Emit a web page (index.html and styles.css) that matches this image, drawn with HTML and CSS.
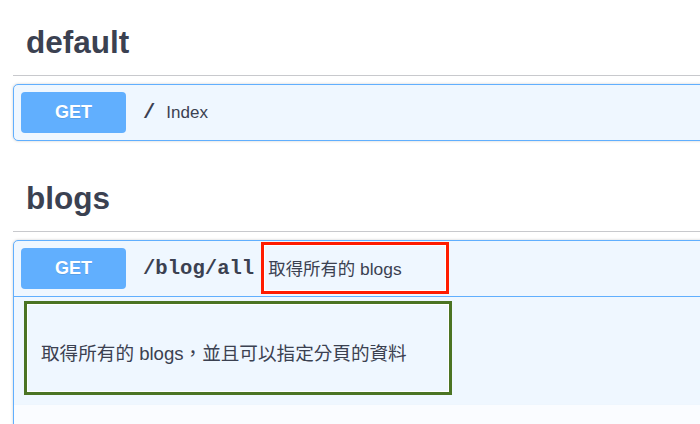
FILE: index.html
```html
<!DOCTYPE html>
<html lang="zh-Hant">
<head>
<meta charset="utf-8">
<title>Swagger</title>
<link rel="stylesheet" href="styles.css">
</head>
<body>
<div class="wrap">
  <section class="tag-section first">
    <h4 class="tag">default</h4>
    <div class="opblock">
      <div class="summary">
        <span class="method">GET</span>
        <span class="path">/</span>
        <span class="desc desc-plain">Index</span>
      </div>
    </div>
  </section>
  <section class="tag-section">
    <h4 class="tag">blogs</h4>
    <div class="opblock open">
      <div class="summary">
        <span class="method">GET</span>
        <span class="path">/blog/all</span>
        <span class="desc desc-red">取得所有的 blogs</span>
      </div>
      <div class="body">
        <div class="note-green">
          <p>取得所有的 blogs，並且可以指定分頁的資料</p>
        </div>
      </div>
      <div class="section-header"></div>
    </div>
  </section>
</div>
</body>
</html>
```

FILE: styles.css
```css
html, body {
  margin: 0;
  padding: 0;
  background: #ffffff;
  overflow: hidden;
}
body {
  font-family: "Liberation Sans", "Noto Sans CJK TC", sans-serif;
  color: #3b4151;
}
.wrap {
  width: 780px;
  padding: 0 0 0 13px;
}
.tag-section {
  margin-top: 24px;
}
.tag-section.first {
  margin-top: 9px;
}
.tag {
  margin: 0 0 8px;
  padding: 13px 26px 13px 13px;
  font-size: 31.5px;
  line-height: 40px;
  font-weight: bold;
  color: #3b4151;
  border-bottom: 1px solid #c8c9cd;
}
.opblock {
  border: 1px solid #61affe;
  border-radius: 5px;
  background: #eff7ff;
  box-shadow: 0 0 3px rgba(0, 0, 0, 0.19);
  overflow: hidden;
}
.summary {
  display: flex;
  align-items: center;
  padding: 7px 7px;
  height: 41px;
}
.opblock.open .summary {
  border-bottom: 1px solid #61affe;
}
.method {
  width: 105px;
  height: 41px;
  flex: none;
  display: flex;
  align-items: center;
  justify-content: center;
  background: #61affe;
  border-radius: 4px;
  color: #ffffff;
  font-size: 18px;
  font-weight: bold;
  text-shadow: 0 1px 0 rgba(0, 0, 0, 0.1);
}
.path {
  margin-left: 17px;
  font-family: "Liberation Mono", monospace;
  font-weight: bold;
  font-size: 20.6px;
  color: #3b4151;
}
.desc {
  font-size: 17.4px;
  color: #3b4151;
}
.desc-plain {
  margin-left: 11px;
  font-size: 17px;
}
.desc-red {
  margin-left: 7px;
  align-self: flex-start;
  margin-top: -6px;
  height: 45.5px;
  padding: 0 44px 0 4px;
  display: flex;
  align-items: center;
  border: 3px solid #ff1c00;
  box-shadow: inset 0 0 0 1px #ffffff;
}
.body {
  padding: 4px 10px 10px 10px;
}
.note-green {
  height: 88px;
  border: 3px solid #4b7423;
  box-shadow: inset 0 0 0 1px #ffffff;
  display: flex;
  align-items: center;
  padding-left: 14px;
  box-sizing: content-box;
  width: 408px;
}
.note-green p {
  margin: 6px 0 0;
  font-size: 18.6px;
  color: #3b4151;
}
.section-header {
  height: 40px;
  background: #fafcff;
  box-shadow: 0 1px 2px rgba(0, 0, 0, 0.1);
}
```
